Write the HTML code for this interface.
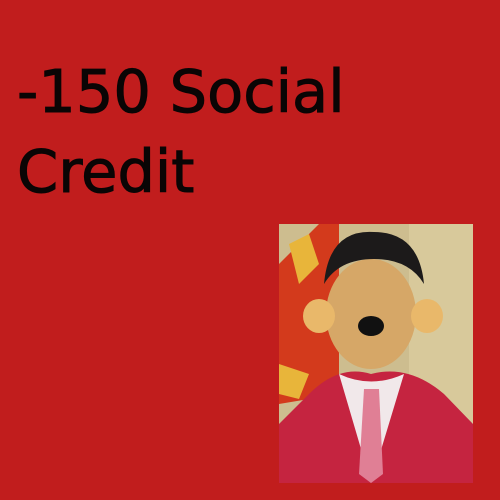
<!DOCTYPE html>
<html><head><meta charset="utf-8"><style>
html,body{margin:0;padding:0}
body{width:500px;height:500px;background:#c11d1d;position:relative;overflow:hidden;font-family:"DejaVu Sans","Liberation Sans",sans-serif}
.t{position:absolute;left:17px;top:52px;font-size:59px;line-height:80px;color:#0a0505;-webkit-text-stroke:1px #0a0505}
.p{position:absolute;left:279px;top:224px;width:194px;height:259px;overflow:hidden;background:#c9b98a}
</style></head><body>
<div class="t">-150 Social<br>Credit</div>
<div class="p">
<svg width="194" height="259" viewBox="0 0 194 259">
<rect width="194" height="259" fill="#cdbd8f"/>
<rect x="130" width="64" height="259" fill="#d8c99b"/>
<path d="M0 40 L40 0 L60 0 L60 170 L0 180Z" fill="#d33a1c"/>
<path d="M10 20 L30 10 L40 40 L20 60Z" fill="#e8b53a"/>
<path d="M0 140 L30 150 L20 175 L0 170Z" fill="#e8b53a"/>
<ellipse cx="92" cy="90" rx="45" ry="55" fill="#d6a767"/>
<path d="M45 60 Q50 5 95 8 Q140 8 145 60 Q130 35 95 35 Q60 35 45 60Z" fill="#1c1a1a"/>
<ellipse cx="40" cy="92" rx="16" ry="17" fill="#e9b86a"/>
<ellipse cx="148" cy="92" rx="16" ry="17" fill="#e9b86a"/>
<ellipse cx="92" cy="102" rx="13" ry="10" fill="#111"/>
<path d="M30 170 Q60 140 92 150 Q130 140 165 170 L194 200 L194 259 L0 259 L0 200Z" fill="#c52440"/>
<path d="M60 150 L92 259 L125 150 Q92 165 60 150Z" fill="#f1e8ea"/>
<path d="M85 165 L100 165 L104 250 L92 259 L80 250Z" fill="#e07f95"/>
</svg>
</div>
</body></html>
